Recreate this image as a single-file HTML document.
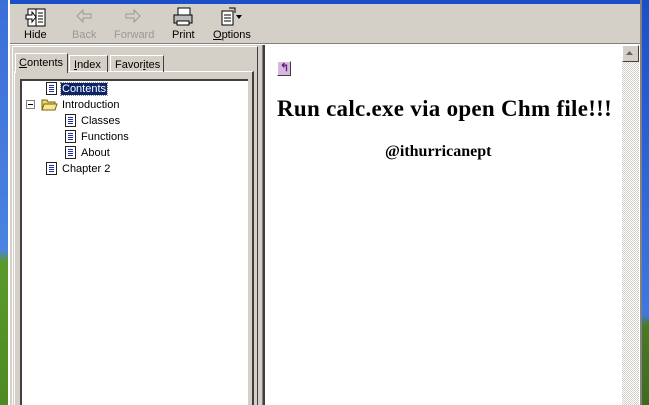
<!DOCTYPE html>
<html><head><style>
*{margin:0;padding:0;box-sizing:border-box}
body{width:649px;height:405px;overflow:hidden;position:relative;background:#d4d0c8;font-family:"Liberation Sans",sans-serif;font-size:11px;color:#000}
.a{position:absolute}
.t{position:absolute;white-space:nowrap}
.doc{position:absolute;width:11px;height:13px;background:#fff;border:1px solid #222}
.doc:after{content:"";position:absolute;left:2px;top:2px;width:5px;height:7px;background:repeating-linear-gradient(#1a2fb0 0 1px,transparent 1px 2px)}
</style></head><body>
<div class="a" style="left:0;top:0;width:649px;height:4px;background:#1b4fc8"></div>
<div class="a" style="left:0;top:0;width:8px;height:405px;background:linear-gradient(#3a6fd8 0,#4b83e0 250px,#5a9a2a 262px,#4e8a22 405px)"></div>
<div class="a" style="left:642px;top:0;width:7px;height:405px;background:linear-gradient(#1b4fc8 0,#3f78e0 315px,#4a7a25 325px,#3e6a1e 405px)"></div>
<div class="a" style="left:8px;top:0;width:2px;height:405px;background:#fff"></div>
<div class="a" style="left:640px;top:0;width:2px;height:405px;background:#808080"></div>
<!-- toolbar -->
<svg class="a" style="left:25px;top:8px" width="22" height="20"><rect x="3" y="1" width="17" height="17" fill="#fff" stroke="#000"/><line x1="11" y1="1" x2="11" y2="18" stroke="#000"/><path d="M1 7h6V4l4 5-4 5v-3H1z" fill="#fff" stroke="#000"/><path d="M13 5h5M13 8h5M13 11h5M13 14h5" stroke="#000"/></svg>
<div class="t" style="left:24px;top:29px;font-size:11px">Hide</div>
<svg class="a" style="left:76px;top:9px" width="16" height="14"><path d="M1 7l6-6v4h8v4H7v4z" fill="none" stroke="#999"/></svg>
<div class="t" style="left:72px;top:29px;color:#999">Back</div>
<svg class="a" style="left:125px;top:9px" width="16" height="14"><path d="M15 7L9 1v4H1v4h8v4z" fill="none" stroke="#999"/></svg>
<div class="t" style="left:114px;top:29px;color:#999">Forward</div>
<svg class="a" style="left:172px;top:7px" width="22" height="20"><rect x="6" y="1" width="12" height="7" fill="#fff" stroke="#000"/><rect x="2" y="8" width="18" height="8" fill="#bbb" stroke="#000"/><rect x="5" y="14" width="12" height="4" fill="#fff" stroke="#000"/></svg>
<div class="t" style="left:172px;top:29px">Print</div>
<svg class="a" style="left:219px;top:7px" width="24" height="20"><rect x="3" y="4" width="11" height="14" fill="#fff" stroke="#000"/><path d="M5 8h7M5 11h7M5 14h7" stroke="#000"/><path d="M10 1h6v5" fill="none" stroke="#000"/><path d="M17 8l3 4 3-4z" fill="#000"/></svg>
<div class="t" style="left:213px;top:29px"><u>O</u>ptions</div>
<div class="a" style="left:10px;top:43px;width:630px;height:1px;background:#808080"></div>
<div class="a" style="left:10px;top:44px;width:630px;height:1px;background:#fff"></div>
<!-- left pane -->
<div class="a" style="left:12px;top:46px;width:246px;height:359px;border-left:1px solid #fff;border-top:1px solid #fff;border-right:1px solid #404040"></div>
<div class="a" style="left:14px;top:71px;width:240px;height:334px;border-left:1px solid #fff;border-top:1px solid #fff;border-right:2px solid #404040"></div>
<div class="a" style="left:15px;top:53px;width:53px;height:20px;background:#d4d0c8;border:1px solid #fff;border-right:1px solid #404040;border-bottom:none"></div>
<div class="t" style="left:19px;top:57px"><u>C</u>ontents</div>
<div class="a" style="left:69px;top:55px;width:39px;height:17px;border:1px solid #fff;border-right:1px solid #404040;border-bottom:none"></div>
<div class="t" style="left:74px;top:59px"><u>I</u>ndex</div>
<div class="a" style="left:110px;top:55px;width:54px;height:17px;border:1px solid #fff;border-right:1px solid #404040;border-bottom:none"></div>
<div class="t" style="left:115px;top:59px">Favor<u>i</u>tes</div>
<div class="a" style="left:20px;top:79px;width:228px;height:326px;background:#fff;border-left:2px solid #404040;border-top:2px solid #404040"></div>
<div class="doc" style="left:46px;top:82px"></div>
<div class="t" style="left:61px;top:83px;background:#0a246a;color:#fff;padding:0 1px;outline:1px dotted #888">Contents</div>
<div class="a" style="left:26px;top:100px;width:9px;height:9px;border:1px solid #808080;background:#fff"></div>
<div class="a" style="left:28px;top:104px;width:5px;height:1px;background:#000"></div>
<svg class="a" style="left:41px;top:98px" width="17" height="13"><path d="M1 2h5l1 2h7v8H1z" fill="#e8d870" stroke="#806000"/><path d="M3 6h13l-2 6H1z" fill="#f4e898" stroke="#806000"/></svg>
<div class="t" style="left:62px;top:99px">Introduction</div>
<div class="doc" style="left:65px;top:114px"></div><div class="t" style="left:81px;top:115px">Classes</div>
<div class="doc" style="left:65px;top:130px"></div><div class="t" style="left:81px;top:131px">Functions</div>
<div class="doc" style="left:65px;top:146px"></div><div class="t" style="left:81px;top:147px">About</div>
<div class="doc" style="left:46px;top:162px"></div><div class="t" style="left:62px;top:163px">Chapter 2</div>
<!-- splitter / right pane -->
<div class="a" style="left:262px;top:45px;width:1px;height:360px;background:#808080"></div>
<div class="a" style="left:263px;top:45px;width:2px;height:360px;background:#404040"></div>
<div class="a" style="left:265px;top:45px;width:375px;height:360px;background:#fff"></div>
<div class="a" style="left:622px;top:45px;width:17px;height:360px;background:repeating-conic-gradient(#d4d0c8 0 25%,#fff 0 50%) 0 0/2px 2px"></div>
<div class="a" style="left:622px;top:45px;width:17px;height:17px;background:#d4d0c8;border:1px solid;border-color:#fff #404040 #404040 #fff"></div>
<svg class="a" style="left:626px;top:51px" width="9" height="5"><path d="M0 4h7L3.5 0z" fill="#666"/></svg>
<div class="a" style="left:277px;top:61px;width:14px;height:15px;background:#d8b8e0;border:1px solid;border-color:#fff #404040 #404040 #fff"></div>
<div class="t" style="left:280px;top:61px;color:#602080;font-weight:bold;font-size:11px">↰</div>
<div class="t" style="left:277px;top:96px;font-family:'Liberation Serif',serif;font-weight:bold;font-size:23px;letter-spacing:0.28px">Run calc.exe via open Chm file!!!</div>
<div class="t" style="left:385px;top:143px;font-family:'Liberation Serif',serif;font-weight:bold;font-size:16px">@ithurricanept</div>
</body></html>
